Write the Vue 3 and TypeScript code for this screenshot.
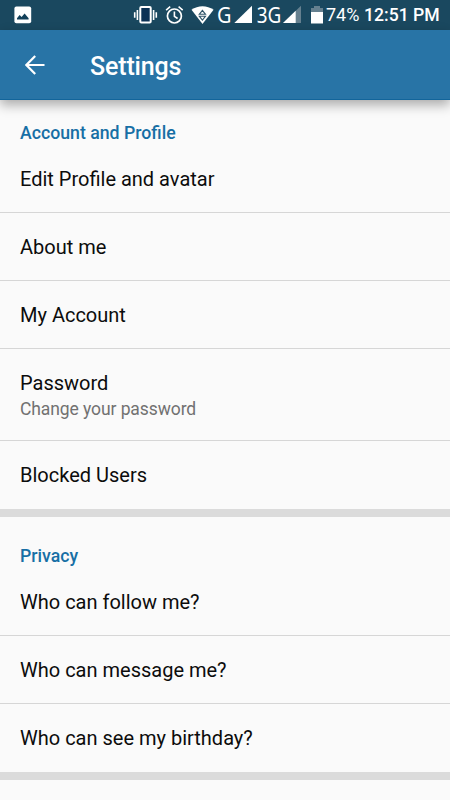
<script setup lang="ts">
interface Item {
  title: string
  summary?: string
}

interface Section {
  heading: string
  items: Item[]
}

const sections: Section[] = [
  {
    heading: 'Account and Profile',
    items: [
      { title: 'Edit Profile and avatar' },
      { title: 'About me' },
      { title: 'My Account' },
      { title: 'Password', summary: 'Change your password' },
      { title: 'Blocked Users' },
    ],
  },
  {
    heading: 'Privacy',
    items: [
      { title: 'Who can follow me?' },
      { title: 'Who can message me?' },
      { title: 'Who can see my birthday?' },
    ],
  },
]
</script>

<template>
  <div class="screen">
    <div class="status">
      <svg class="picture" width="18" height="18" viewBox="0 0 18 18">
        <rect x="0.4" y="0.4" width="16.8" height="16.8" rx="2" fill="#fff" />
        <path d="M3 13.6v-1.4l2.6-3.2 2 2 3-3.6 4 4.8v1.4z" fill="#12405a" />
      </svg>
      <svg class="indicators" width="192" height="30" viewBox="132 0 192 30">
        <rect x="140.3" y="7.1" width="10.4" height="15.4" rx="1" fill="#0b3155" stroke="#fff" stroke-width="2" />
        <path d="M137.4 10v10M153.6 10v10M134.7 12.3v5.4M156.3 12.3v5.4" stroke="#fff" stroke-width="1.6" />
        <circle cx="174.4" cy="16" r="7" fill="none" stroke="#fff" stroke-width="1.7" />
        <path d="M174.4 11.5v4.8l3.2 2.2M166.1 10.2l4.1-3.5M182.7 10.2l-4.1-3.5" fill="none" stroke="#fff" stroke-width="1.6" />
        <path d="M191.5 9.8C198 4.9 207 4.9 213.6 9.8L202.5 24z" fill="#fff" />
        <path d="M202.4 10.3l3.1 4h-6.2zM199.3 16.2h6.2l-3.1 4z" fill="#fff" stroke="#31566b" stroke-width="1.1" />
        <text x="217" y="22.8" class="network" textLength="14.5" lengthAdjust="spacingAndGlyphs">G</text>
        <path d="M234.3 23L252 5.7V23z" fill="#fff" />
        <text x="256.8" y="22.8" class="network" textLength="24.6" lengthAdjust="spacingAndGlyphs">3G</text>
        <path d="M283 23L301 5.7V23z" fill="#65808f" />
        <path d="M283 23L295.7 10.8V23z" fill="#fff" />
        <path d="M311 8h3V6h6v2h3v5h-12z" fill="#65808f" />
        <path d="M311 12h12v11.5h-12z" fill="#fff" />
      </svg>
      <span class="battery">74%</span>
      <span class="time">12:51 PM</span>
    </div>
    <header class="bar">
      <svg class="back" width="20" height="20" viewBox="0 0 20 20">
        <path d="M19.5 10H1.7M10.2 1L1.4 10l8.8 9" fill="none" stroke="#fff" stroke-width="2.2" />
      </svg>
      <h1>Settings</h1>
    </header>
    <main>
      <section v-for="section in sections" :key="section.heading">
        <h2>{{ section.heading }}</h2>
        <ul>
          <li v-for="item in section.items" :key="item.title">
            <div class="title">{{ item.title }}</div>
            <div v-if="item.summary" class="summary">{{ item.summary }}</div>
          </li>
        </ul>
      </section>
    </main>
  </div>
</template>

<style>
body {
  margin: 0;
  background: #fafafa;
}
</style>

<style scoped>
.screen {
  width: 450px;
  height: 800px;
  overflow: hidden;
  background: #fafafa;
  font-family: Roboto, "Liberation Sans", sans-serif;
  color: #0c0c0c;
}
.status {
  display: flex;
  align-items: center;
  height: 30px;
  background: #1a485f;
  color: #fff;
  font-size: 18px;
  line-height: 32px;
  white-space: nowrap;
}
.picture {
  flex: none;
  margin-left: 14px;
}
.indicators {
  flex: none;
  margin-left: 100px;
  overflow: visible;
}
.network {
  font: 22px "Noto Sans", sans-serif;
  fill: #fff;
}
.battery {
  width: 38px;
  margin-left: 2px;
}
.time {
  font-size: 17.6px;
  font-weight: 500;
}
.bar {
  display: flex;
  align-items: center;
  position: relative;
  box-sizing: border-box;
  height: 70px;
  padding-left: 25px;
  background: #2874a6;
  border-bottom: 1px solid #12659b;
  box-shadow: 0 5px 11px rgba(0, 0, 0, 0.32);
}
h1 {
  margin: 4px 0 0 45px;
  color: #fff;
  font-size: 25px;
  font-weight: 500;
  line-height: 30px;
  letter-spacing: -0.15px;
}
section {
  border-bottom: 8px solid #dbdbdb;
}
h2 {
  margin: 0;
  padding: 23px 20px 3px;
  color: #176fa5;
  font-size: 17.7px;
  font-weight: 500;
  line-height: 20px;
}
section + section h2 {
  padding-top: 29px;
}
ul {
  list-style: none;
  margin: 0;
  padding: 0;
}
li {
  padding: 21px 20px 20px;
  border-bottom: 1px solid #d6d6d6;
}
li:first-child {
  padding-top: 20px;
}
li:last-child {
  padding-bottom: 21px;
  border-bottom: 0;
}
.title {
  font-size: 20px;
  line-height: 26px;
}
.summary {
  margin-bottom: -2px;
  color: #717171;
  font-size: 17.5px;
  line-height: 26px;
  letter-spacing: -0.09px;
}
</style>
